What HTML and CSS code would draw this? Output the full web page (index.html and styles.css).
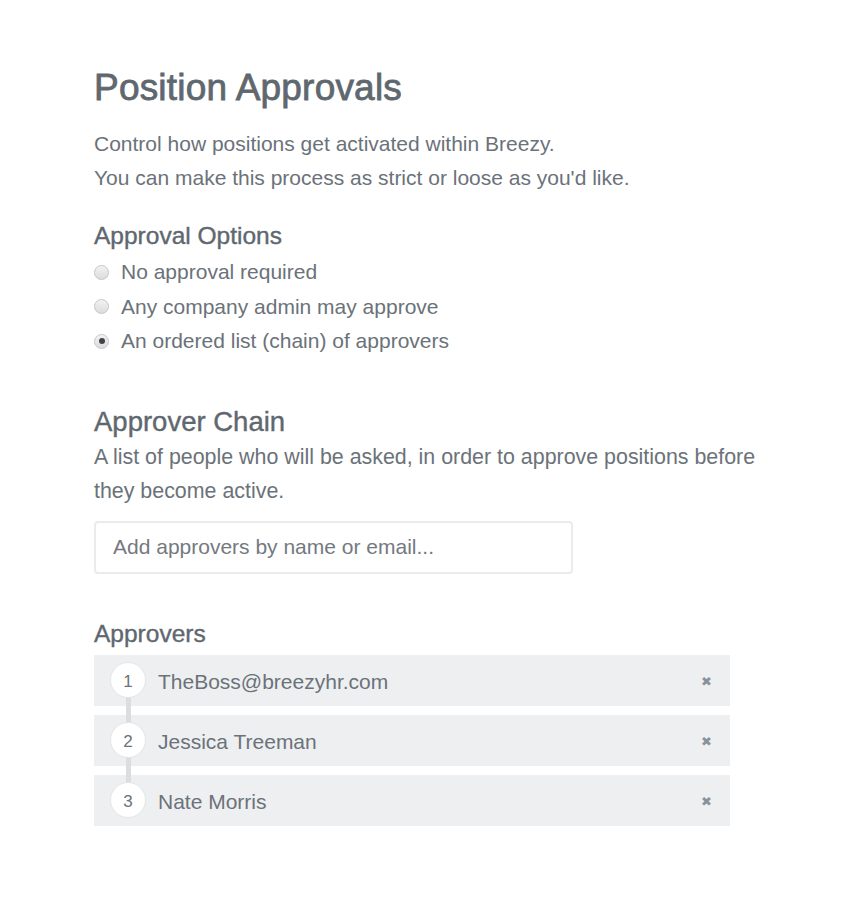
FILE: index.html
```html
<!DOCTYPE html>
<html>
<head>
<meta charset="utf-8">
<link rel="stylesheet" href="styles.css">
</head>
<body>
<div class="page">
  <h1 class="title">Position Approvals</h1>
  <p class="intro">Control how positions get activated within Breezy.<br>You can make this process as strict or loose as you'd like.</p>

  <h2 class="subhead">Approval Options</h2>
  <div class="options">
    <div class="option"><span class="radio"></span><span>No approval required</span></div>
    <div class="option"><span class="radio"></span><span>Any company admin may approve</span></div>
    <div class="option"><span class="radio checked"></span><span>An ordered list (chain) of approvers</span></div>
  </div>

  <h2 class="section-title">Approver Chain</h2>
  <p class="desc">A list of people who will be asked, in order to approve positions before they become active.</p>

  <div class="input"><span class="placeholder">Add approvers by name or email...</span></div>

  <h2 class="subhead approvers-head">Approvers</h2>
  <div class="list">
    <div class="chain-line"></div>
    <div class="row"><span class="num">1</span><span class="name">TheBoss@breezyhr.com</span><span class="remove">&#10006;</span></div>
    <div class="row"><span class="num">2</span><span class="name">Jessica Treeman</span><span class="remove">&#10006;</span></div>
    <div class="row"><span class="num">3</span><span class="name">Nate Morris</span><span class="remove">&#10006;</span></div>
  </div>
</div>
</body>
</html>
```
FILE: styles.css
```css
html, body {
  margin: 0;
  padding: 0;
  background: #ffffff;
}
body {
  font-family: "Liberation Sans", Arial, sans-serif;
  color: #6b7279;
}
.page {
  padding: 66px 0 40px 94px;
  width: 666px;
}
.title {
  margin: 0;
  font-size: 37px;
  line-height: 44px;
  font-weight: normal;
  letter-spacing: 0.2px;
  color: #5f676f;
  -webkit-text-stroke: 0.8px #5f676f;
}
.intro {
  margin: 17px 0 0;
  font-size: 21px;
  line-height: 34px;
}
.subhead {
  margin: 26px 0 0;
  font-size: 24.5px;
  line-height: 30px;
  font-weight: normal;
  color: #5f676f;
  -webkit-text-stroke: 0.4px #5f676f;
}
.options {
  margin-top: 4px;
}
.option {
  display: flex;
  align-items: center;
  height: 34.5px;
  font-size: 21px;
}
.radio {
  width: 13px;
  height: 13px;
  border-radius: 50%;
  border: 1px solid #c4c6c8;
  background: linear-gradient(#f2f2f2, #dcdcdc);
  margin-right: 12px;
  display: flex;
  align-items: center;
  justify-content: center;
  flex: none;
}
.radio.checked::after {
  content: "";
  width: 6px;
  height: 6px;
  border-radius: 50%;
  background: #404348;
}
.section-title {
  margin: 47px 0 0;
  font-size: 27.5px;
  line-height: 32px;
  font-weight: normal;
  color: #5f676f;
  -webkit-text-stroke: 0.4px #5f676f;
}
.desc {
  margin: 2px 0 0;
  font-size: 21.4px;
  line-height: 34px;
}
.input {
  margin-top: 13px;
  height: 49px;
  border: 2px solid #ebebeb;
  border-radius: 4px;
  display: flex;
  align-items: center;
  padding-left: 17px;
  box-sizing: content-box;
  width: 458px;
}
.placeholder {
  font-size: 21px;
  color: #74797f;
}
.approvers-head {
  margin-top: 45px;
}
.list {
  position: relative;
  margin-top: 6px;
  width: 636px;
  display: flex;
  flex-direction: column;
  gap: 9px;
}
.chain-line {
  position: absolute;
  left: 32px;
  top: 26px;
  bottom: 26px;
  width: 5px;
  background: #dcdddf;
  z-index: 1;
}
.row {
  display: flex;
  align-items: center;
  height: 51px;
  background: #eeeff1;
  padding: 0 18px 0 16px;
}
.num {
  position: relative;
  z-index: 2;
  width: 36px;
  height: 36px;
  box-sizing: border-box;
  padding-top: 3px;
  border-radius: 50%;
  background: #ffffff;
  border: 1px solid #e4e5e7;
  display: flex;
  align-items: center;
  justify-content: center;
  font-size: 17px;
  color: #6b7279;
  flex: none;
}
.name {
  margin-left: 12px;
  padding-top: 3px;
  font-size: 21px;
  flex: 1;
}
.remove {
  font-size: 13px;
  padding-top: 2px;
  color: #8b9199;
}
```
